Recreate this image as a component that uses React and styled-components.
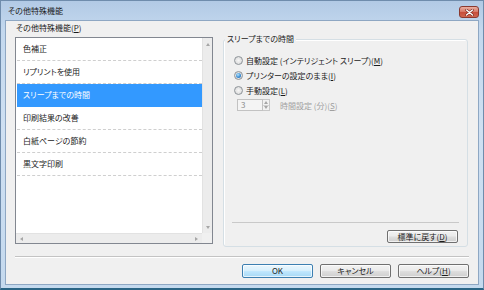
import React from 'react';
import styled, { createGlobalStyle } from 'styled-components';

const Global = createGlobalStyle`
  html, body { margin: 0; padding: 0; background: #ffffff; }
  #root { width: 484px; height: 290px; }
`;

const Window = styled.div`
  box-sizing: border-box;
  width: 484px;
  height: 290px;
  display: flex;
  flex-direction: column;
  border: 1px solid #6f8cac;
  border-bottom: 2px solid #2a6585;
  background: linear-gradient(180deg, #b2cae5 0%, #c3d8ee 10%, #cfe0f2 45%, #c4d9ee 100%);
  padding: 0 4px 3px;
  font-family: "Noto Sans CJK JP", "Noto Sans", sans-serif;
  font-size: 8px;
  font-feature-settings: "palt";
  color: #1b1b1b;
`;

const TitleBar = styled.div`
  height: 19px;
  display: flex;
  align-items: center;
  justify-content: space-between;
  padding-left: 3px;
`;

const Title = styled.span`
  line-height: 12px;
  color: #1a1a1a;
`;

const CloseButton = styled.div`
  box-sizing: border-box;
  align-self: flex-start;
  margin-top: 5px;
  width: 20px;
  height: 12px;
  border: 1px solid #8a3a30;
  border-radius: 3px;
  background: linear-gradient(180deg, #eab0a2 0%, #d87b6a 45%, #c74f3c 55%, #d0664f 100%);
  display: flex;
  align-items: center;
  justify-content: center;
`;

const Client = styled.div`
  flex: 1;
  display: flex;
  flex-direction: column;
  border: 1px solid #8ea7c3;
  background: #f0f0f0;
  padding: 0 9px 5px 9px;
`;

const Main = styled.div`
  display: grid;
  grid-template-columns: 198px 245px;
  column-gap: 10px;
  height: 226px;
`;

const LeftColumn = styled.div`
  display: flex;
  flex-direction: column;
`;

const FieldLabel = styled.div`
  height: 16px;
  line-height: 13px;
  padding-left: 1px;
`;

const ListBox = styled.div`
  box-sizing: border-box;
  height: 207px;
  border: 1px solid #828790;
  background: #ffffff;
  display: grid;
  grid-template-columns: 1fr 10px;
  grid-template-rows: 1fr 10px;
`;

const Items = styled.div`
  padding-left: 1px;
  overflow: hidden;
`;

const Item = styled.div`
  box-sizing: border-box;
  height: 23px;
  line-height: 22px;
  padding-left: 6px;
  border-bottom: 1px dashed ${p => (p.$selected ? '#3399ff' : '#cfcfcf')};
  background: ${p => (p.$selected ? '#3399ff' : 'transparent')};
  color: ${p => (p.$selected ? '#ffffff' : '#1b1b1b')};
`;

const VScroll = styled.div`
  background: #ececec;
  border-left: 1px solid #e2e2e2;
  display: flex;
  flex-direction: column;
  justify-content: space-between;
  align-items: center;
  padding: 5px 0 4px;
`;

const HScroll = styled.div`
  background: #ececec;
  border-top: 1px solid #e2e2e2;
  display: flex;
  justify-content: space-between;
  align-items: center;
  padding: 0 4px 0 4px;
`;

const Corner = styled.div`
  background: #f0f0f0;
`;

const GroupBox = styled.div`
  position: relative;
  box-sizing: border-box;
  margin-top: 18px;
  height: 208px;
  border: 1px solid #d5dfe5;
  border-radius: 3px;
  box-shadow: inset 1px 1px 0 #ffffff;
  display: flex;
  flex-direction: column;
  padding: 13px 8px 3px 10px;
`;

const GroupTitle = styled.span`
  position: absolute;
  left: 1px;
  top: -7px;
  padding: 0 2px;
  line-height: 12px;
  background: #f0f0f0;
`;

const RadioRow = styled.label`
  display: flex;
  align-items: center;
  height: 15px;
  gap: 3px;
`;

const Radio = styled.span`
  box-sizing: border-box;
  width: 9px;
  height: 9px;
  border-radius: 50%;
  border: 1px solid #8e9499;
  background: radial-gradient(circle at 50% 50%, #f6f6f6 0%, #e2e2e2 60%, #cfcfcf 100%);
  display: flex;
  align-items: center;
  justify-content: center;
  &::after {
    content: '';
    width: 5px;
    height: 5px;
    border-radius: 50%;
    display: ${p => (p.$checked ? 'block' : 'none')};
    background: radial-gradient(circle at 40% 35%, #b6e4fb 0%, #3c8fd6 55%, #1a5ea6 100%);
  }
`;

const SpinRow = styled.div`
  display: flex;
  align-items: center;
  margin-top: 1px;
  margin-left: 3px;
  height: 12px;
  color: #a0a0a0;
`;

const SpinInput = styled.div`
  box-sizing: border-box;
  width: 26px;
  height: 12px;
  border: 1px solid #c2c2c2;
  background: #f4f4f4;
  line-height: 10px;
  padding-left: 3px;
  color: #8c8c8c;
`;

const SpinButtons = styled.div`
  box-sizing: border-box;
  width: 7px;
  height: 12px;
  display: flex;
  flex-direction: column;
  border: 1px solid #c8c8c8;
  border-left: none;
  margin-right: 10px;
`;

const SpinHalf = styled.div`
  flex: 1;
  display: flex;
  align-items: center;
  justify-content: center;
  background: #f2f2f2;
  & + & { border-top: 1px solid #d2d2d2; }
`;

const Spacer = styled.div`
  flex: 1;
`;

const InnerRule = styled.div`
  border-top: 1px solid #c9c9c9;
  margin: 0 0 7px -2px;
`;

const GroupFooter = styled.div`
  display: flex;
  justify-content: flex-end;
  padding-right: 1px;
`;

const Button = styled.button`
  box-sizing: border-box;
  width: 71px;
  height: ${p => (p.$small ? 13 : 14)}px;
  padding: 0;
  font-family: inherit;
  font-size: 8px;
  font-feature-settings: "palt";
  line-height: 10px;
  color: #1b1b1b;
  border: 1px solid ${p => (p.$default ? '#3c7fb1' : '#707070')};
  border-radius: 2px;
  background: ${p =>
    p.$default
      ? 'linear-gradient(180deg, #eaf6fd 0%, #d9f0fc 45%, #bee6fd 55%, #a7d9f5 100%)'
      : 'linear-gradient(180deg, #f2f2f2 0%, #ebebeb 45%, #dddddd 55%, #cfcfcf 100%)'};
  box-shadow: inset 0 0 0 1px rgba(255, 255, 255, 0.7);
`;

const Separator = styled.div`
  margin-top: 9px;
  border-top: 1px solid #c3c3c3;
  border-bottom: 1px solid #ffffff;
`;

const ButtonRow = styled.div`
  display: flex;
  justify-content: flex-end;
  gap: 7px;
  margin-top: 6px;
`;

const Arrow = ({ dir }) => {
  const pts = {
    up: '0,3 2,0 4,3',
    down: '0,0 2,3 4,0',
    left: '3,0 0,2 3,4',
    right: '0,0 3,2 0,4',
  }[dir];
  const vertical = dir === 'up' || dir === 'down';
  return (
    <svg width={vertical ? 4 : 3} height={vertical ? 3 : 4} viewBox={vertical ? '0 0 4 3' : '0 0 3 4'}>
      <polygon points={pts} fill="#a6a6a6" />
    </svg>
  );
};

const items = ['色補正', 'リプリントを使用', 'スリープまでの時間', '印刷結果の改善', '白紙ページの節約', '黒文字印刷'];

export default function App() {
  return (
    <>
      <Global />
      <Window>
        <TitleBar>
          <Title>その他特殊機能</Title>
          <CloseButton>
            <svg width="9" height="7" viewBox="0 0 9 7">
              <path d="M1.5 1 L7.5 6 M7.5 1 L1.5 6" stroke="#7a2a20" strokeWidth="2.6" strokeLinecap="round" />
              <path d="M1.5 1 L7.5 6 M7.5 1 L1.5 6" stroke="#ffffff" strokeWidth="1.4" strokeLinecap="round" />
            </svg>
          </CloseButton>
        </TitleBar>
        <Client>
          <Main>
            <LeftColumn>
              <FieldLabel>その他特殊機能(<u>P</u>)</FieldLabel>
              <ListBox>
                <Items>
                  {items.map((t, i) => (
                    <Item key={t} $selected={i === 2}>{t}</Item>
                  ))}
                </Items>
                <VScroll>
                  <Arrow dir="up" />
                  <Arrow dir="down" />
                </VScroll>
                <HScroll>
                  <Arrow dir="left" />
                  <Arrow dir="right" />
                </HScroll>
                <Corner />
              </ListBox>
            </LeftColumn>
            <GroupBox>
              <GroupTitle>スリープまでの時間</GroupTitle>
              <RadioRow>
                <Radio />
                <span>自動設定 (インテリジェント スリープ)(<u>M</u>)</span>
              </RadioRow>
              <RadioRow>
                <Radio $checked />
                <span>プリンターの設定のまま(<u>I</u>)</span>
              </RadioRow>
              <RadioRow>
                <Radio />
                <span>手動設定(<u>L</u>)</span>
              </RadioRow>
              <SpinRow>
                <SpinInput>3</SpinInput>
                <SpinButtons>
                  <SpinHalf><Arrow dir="up" /></SpinHalf>
                  <SpinHalf><Arrow dir="down" /></SpinHalf>
                </SpinButtons>
                <span>時間設定 (分)(<u>S</u>)</span>
              </SpinRow>
              <Spacer />
              <InnerRule />
              <GroupFooter>
                <Button $small>標準に戻す(<u>D</u>)</Button>
              </GroupFooter>
            </GroupBox>
          </Main>
          <Separator />
          <ButtonRow>
            <Button $default>OK</Button>
            <Button>キャンセル</Button>
            <Button>ヘルプ(<u>H</u>)</Button>
          </ButtonRow>
        </Client>
      </Window>
    </>
  );
}
